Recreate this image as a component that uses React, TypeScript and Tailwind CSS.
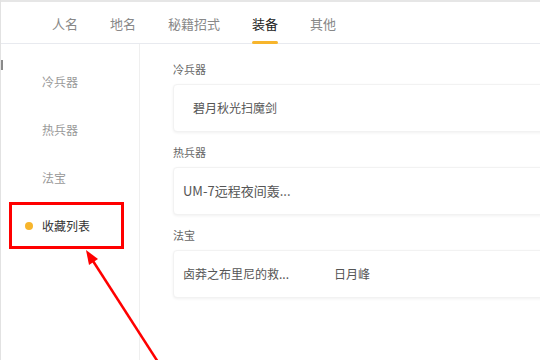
import React from 'react';

const tabs = ['人名', '地名', '秘籍招式', '装备', '其他'];
const sideItems = ['冷兵器', '热兵器', '法宝'];

function Card({ label, children, first }: { label: string; children: React.ReactNode; first?: boolean }) {
    return (
        <div className={first ? '' : 'mt-[12px]'}>
            <div className="h-4 leading-4 text-[11px] text-[#666] mb-[7px]">{label}</div>
            <div className="w-[390px] h-[48px] flex items-center rounded-[4px] border border-[#f2f2f2] shadow-[0_1px_3px_rgba(0,0,0,0.06)] bg-white">
                {children}
            </div>
        </div>
    );
}

export default function App() {
    return (
        <div className="relative w-[540px] h-[360px] overflow-hidden bg-white border-l border-[#e2e2e2] font-['Noto_Sans_CJK_SC',sans-serif]">
            <div className="h-[2px] bg-[#e6e6e6]" />

            <header className="h-[42px] border-b border-[#e8eaef] flex items-stretch pl-[51px] gap-8">
                {tabs.map((t) => {
                    const active = t === '装备';
                    return (
                        <div key={t} className="relative flex items-center pt-[3px]">
                            <span className={active ? 'text-[13px] text-[#222]' : 'text-[13px] text-[#888]'}>{t}</span>
                            {active && <div className="absolute left-0 right-0 bottom-[-1px] h-[3px] rounded-full bg-[#f7b52c]" />}
                        </div>
                    );
                })}
            </header>

            <div className="flex h-[316px]">
                <aside className="w-[139px] shrink-0 border-r border-[#efefef] pt-[14px]">
                    {sideItems.map((s) => (
                        <div key={s} className="h-[48px] flex items-center pl-[41px] text-[12px] text-[#999]">
                            {s}
                        </div>
                    ))}
                    <div className="h-[48px] flex items-center pl-[24px] gap-[9px] text-[12px] text-[#333]">
                        <span className="w-[8px] h-[8px] rounded-full bg-[#f7b52c]" />
                        收藏列表
                    </div>
                </aside>

                <main className="flex-1 pl-[33px] pt-[17px]">
                    <Card label="冷兵器" first>
                        <span className="pl-[19px] text-[12px] text-[#555]">碧月秋光扫魔剑</span>
                    </Card>
                    <Card label="热兵器">
                        <span className="pl-[9px] text-[13px] text-[#555]">UM-7远程夜间轰...</span>
                    </Card>
                    <Card label="法宝">
                        <span className="pl-[9px] w-[160px] text-[12px] text-[#555]">卤莽之布里尼的救...</span>
                        <span className="text-[12px] text-[#555]">日月峰</span>
                    </Card>
                </main>
            </div>

            {/* left edge mark */}
            <div className="absolute left-0 top-[60px] w-[2px] h-[10px] bg-[#8a8a8a]" />

            {/* annotation */}
            <div className="absolute left-[8px] top-[202px] w-[115px] h-[47px] border-[3px] border-[#ff0000]" />
            <svg className="absolute inset-0 pointer-events-none" width="540" height="360" viewBox="0 0 540 360">
                <line x1="157" y1="362" x2="92" y2="261" stroke="#ff0000" strokeWidth="2.5" />
                <polygon points="85,250 97,259 88,265" fill="#ff0000" />
            </svg>
        </div>
    );
}
